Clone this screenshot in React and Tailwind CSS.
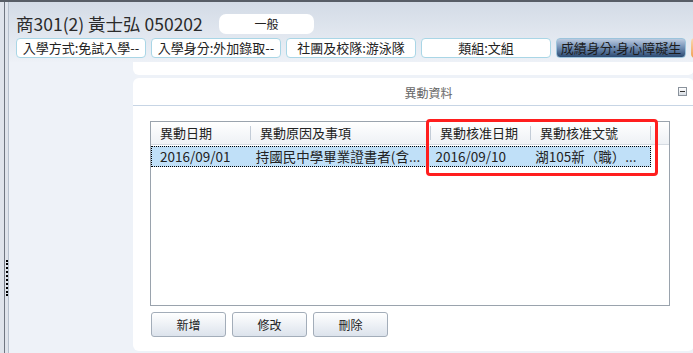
import React from 'react';

const FONT = { fontFamily: '"Noto Sans CJK TC", "Noto Sans", sans-serif' };

const tags = [
  '入學方式:免試入學--',
  '入學身分:外加錄取--',
  '社團及校隊:游泳隊',
  '類組:文組',
];

const columns = [
  { title: '異動日期', w: 'w-[100px]' },
  { title: '異動原因及事項', w: 'w-[180px]' },
  { title: '異動核准日期', w: 'w-[100px]' },
  { title: '異動核准文號', w: 'w-[120px]' },
];

const row = [
  { text: '2016/09/01', w: 'w-[100px] pl-[8px]' },
  { text: '持國民中學畢業證書者(含...', w: 'w-[180px] pl-[4px]' },
  { text: '2016/09/10', w: 'w-[100px] pl-[4px]' },
  { text: '湖105新（職）...', w: 'w-[119px] pl-[4px]' },
];

const Button = ({ label }) => (
  <button className="w-[75px] h-[25px] rounded-[3px] border border-[#a3adb9] bg-linear-to-b from-[#ffffff] to-[#dce3ec] text-[12px] text-[#222] flex items-center justify-center">
    {label}
  </button>
);

export default function App() {
  return (
    <div
      className="relative w-[693px] h-[353px] overflow-hidden bg-[#eef2f8] border-t-2 border-[#575d66] flex"
      style={FONT}
    >
      {/* left splitter strip */}
      <div className="w-[9px] h-full flex shrink-0 bg-[#dfe4ec]">
        <div className="w-[4px] h-full" />
        <div className="w-px h-full bg-[#6f7681]" />
        <div className="w-[3px] h-full flex flex-col items-end">
          <div className="mt-[258px] h-[36px] w-[2px] border-l-2 border-dotted border-black" />
        </div>
        <div className="w-px h-full bg-[#b6c0cd]" />
      </div>

      <div className="flex-1 flex flex-col">
        {/* header */}
        <div className="h-[60px] bg-linear-to-b from-[#d3dbe6] to-[#edf1f7] flex flex-col">
          <div className="flex items-center h-[28px] mt-[8px] pl-[7px]">
            <div className="text-[17.5px] leading-none text-[#2a2a2a] w-[202px] whitespace-nowrap">商301(2) 黃士弘 050202</div>
            <div className="ml-[1px] w-[95px] h-[20px] rounded-[7px] bg-white flex items-center justify-center text-[12px] text-[#222]">
              一般
            </div>
          </div>
          <div className="flex gap-[5px] pl-[7px]">
            {tags.map((t) => (
              <div
                key={t}
                className="w-[130px] h-[20px] rounded-[4px] border border-[#a9d6e6] bg-white flex items-center justify-center text-[13px] text-[#222] whitespace-nowrap"
              >
                {t}
              </div>
            ))}
            <div className="w-[130px] h-[20px] rounded-[4px] border border-[#9cc4dc] bg-linear-to-b from-[#bccbe0] via-[#6e8bb1] to-[#2c4a72] flex items-center justify-center text-[13px] text-[#1c1c1c] whitespace-nowrap">
              成績身分:身心障礙生
            </div>
            <div className="w-[10px] h-[20px] rounded-l-[4px] bg-linear-to-b from-[#fbd9b0] to-[#f0a050]" />
          </div>
        </div>

        {/* body */}
        <div className="flex-1 flex pl-[124px] pr-[7px] pb-[2px]">
          <div className="flex-1 flex flex-col">
            <div className="h-[13px] bg-white rounded-b-[6px]" />
            <div className="flex-1 mt-[3px] bg-white rounded-[6px] flex flex-col">
              <div className="h-[28px] border-b border-[#c7d5e5] flex items-center relative">
                <div className="flex-1 text-center text-[12px] text-[#666] pl-[30px] pt-[2px]">異動資料</div>
                <div className="absolute right-[7px] top-[9px] w-[9px] h-[9px] border border-[#8a929c] bg-linear-to-b from-white to-[#d8dde4] flex items-center justify-center">
                  <div className="w-[5px] h-px bg-[#333]" />
                </div>
              </div>

              {/* table */}
              <div className="mt-[15px] ml-[17px] w-[520px] h-[185px] border border-[#9aa3ad] flex flex-col">
                <div className="h-[23px] bg-linear-to-b from-white to-[#eef1f5] border-b border-[#d5dbe2] flex items-center">
                  {columns.map((c) => (
                    <div key={c.title} className={`${c.w} h-full flex items-center pl-[9px] text-[13px] text-[#222]`}>
                      <span className="whitespace-nowrap">{c.title}</span>
                      <span className="ml-auto h-[14px] w-px bg-[#c3ccd7]" />
                    </div>
                  ))}
                </div>
                <div className="mt-px w-[500px] h-[21px] bg-[#c0e0f8] border border-dotted border-black flex items-center text-[13.5px] text-[#222]">
                  {row.map((c) => (
                    <div key={c.text} className={`${c.w} whitespace-nowrap overflow-hidden`}>
                      {c.text}
                    </div>
                  ))}
                </div>
              </div>

              <div className="flex gap-[6px] ml-[18px] mt-[6px]">
                <Button label="新增" />
                <Button label="修改" />
                <Button label="刪除" />
              </div>
            </div>
          </div>
        </div>
      </div>

      {/* red highlight annotation */}
      <div className="absolute left-[426px] top-[117px] w-[232px] h-[57px] border-[3px] border-[#ff1e1e] rounded-[4px]" />
    </div>
  );
}
